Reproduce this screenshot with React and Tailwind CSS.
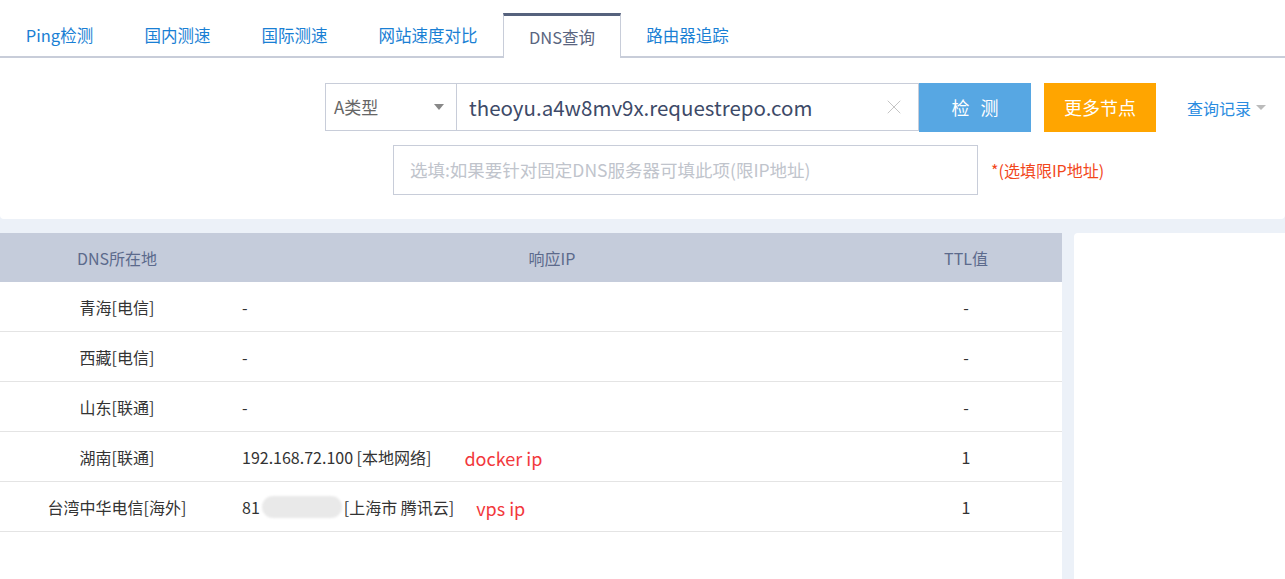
import { X } from 'lucide-react';

const tabs = [
  { name: 'Ping检测', w: 'w-[119px]' },
  { name: '国内测速', w: 'w-[117px]' },
  { name: '国际测速', w: 'w-[117px]' },
  { name: '网站速度对比', w: 'w-[150px]' },
  { name: 'DNS查询', w: 'w-[118px]', active: true },
  { name: '路由器追踪', w: 'w-[133px]' },
];

const rows = [
  { loc: '青海[电信]', ip: '-', ttl: '-' },
  { loc: '西藏[电信]', ip: '-', ttl: '-' },
  { loc: '山东[联通]', ip: '-', ttl: '-' },
  { loc: '湖南[联通]', ip: '192.168.72.100 [本地网络]', note: 'docker ip', ttl: '1' },
  { loc: '台湾中华电信[海外]', ip: 'vps', note: 'vps ip', ttl: '1' },
];

const App = () => {
  return (
    <div
      className="w-[1285px] h-[579px] overflow-hidden bg-[#ecf1f8] text-[#333]"
      style={{ fontFamily: '"Noto Sans CJK SC", "Noto Sans", sans-serif' }}
    >
      {/* Top panel */}
      <div className="bg-white rounded-b-[4px] h-[219px]">
        {/* Tabs */}
        <div className="pt-[13px] border-b-2 border-[#c8cdd9] flex h-[58px]">
          {tabs.map((t) =>
            t.active ? (
              <div
                key={t.name}
                className={`${t.w} h-[45px] -mb-[2px] flex items-center justify-center border-t-[3px] border-x border-t-[#56627d] border-x-[#c8cdd9] bg-white text-[16.5px] text-[#5a6580]`}
              >
                {t.name}
              </div>
            ) : (
              <div
                key={t.name}
                className={`${t.w} h-[44px] flex items-center justify-center text-[16.5px] text-[#1a7fd4]`}
              >
                {t.name}
              </div>
            )
          )}
        </div>

        {/* Query form */}
        <div className="flex mt-[25px]">
          <div className="ml-[325px] w-[132px] h-[48px] border border-[#c8cdd9] flex items-center justify-between pl-[8px] pr-[12px] text-[17px] text-[#666]">
            <span>A类型</span>
            <span className="w-0 h-0 border-x-[5px] border-x-transparent border-t-[6px] border-t-[#888]" />
          </div>
          <div className="w-[462px] h-[48px] border-y border-r border-[#c8cdd9] flex items-center justify-between pl-[12px] pr-[12px]">
            <span className="text-[20.5px] text-[#3d4a68]">theoyu.a4w8mv9x.requestrepo.com</span>
            <X size={24} strokeWidth={1} className="text-[#c5c5c5]" />
          </div>
          <button className="w-[112px] h-[49px] bg-[#57a7e3] text-white text-[18px] tracking-[0.6em] pl-[0.6em]">
            检测
          </button>
          <button className="ml-[13px] w-[112px] h-[49px] bg-[#ffa500] text-white text-[18px]">
            更多节点
          </button>
          <div className="ml-[31px] h-[49px] flex items-center gap-[5px] text-[16px] text-[#2a8ce0]">
            查询记录
            <span className="w-0 h-0 border-x-[5px] border-x-transparent border-t-[5px] border-t-[#bbb]" />
          </div>
        </div>
        <div className="flex items-center mt-[13px]">
          <div className="ml-[393px] w-[585px] h-[50px] border border-[#c8cdd9] flex items-center pl-[16px] text-[17.5px] text-[#c0c4cc]">
            选填:如果要针对固定DNS服务器可填此项(限IP地址)
          </div>
          <span className="ml-[13px] text-[16px] text-[#f2471c]">*(选填限IP地址)</span>
        </div>
      </div>

      {/* Results */}
      <div className="flex mt-[14px] gap-[12px]">
        <div className="w-[1062px] bg-white h-[346px]">
          <div className="grid grid-cols-[234px_636px_192px] h-[49px] items-center bg-[#c5ccdb] text-[16px] text-[#5c6a8c]">
            <div className="text-center">DNS所在地</div>
            <div className="text-center">响应IP</div>
            <div className="text-center">TTL值</div>
          </div>
          {rows.map((r) => (
            <div
              key={r.loc}
              className="grid grid-cols-[234px_636px_192px] h-[50px] items-center border-b border-[#e4e4e4] text-[16px] text-[#333]"
            >
              <div className="text-center">{r.loc}</div>
              <div className="pl-[8px] flex items-center">
                {r.ip === 'vps' ? (
                  <>
                    <span>81</span>
                    <span className="w-[80px] h-[22px] rounded-full bg-[#e9e9e9] blur-[1px] mx-[2px]" />
                    <span>[上海市 腾讯云]</span>
                  </>
                ) : (
                  <span>{r.ip}</span>
                )}
                {r.note && (
                  <span
                    className={`text-[18px] text-[#f2383c] ${r.ip === 'vps' ? 'ml-[22px]' : 'ml-[33px]'} mt-[4px]`}
                  >
                    {r.note}
                  </span>
                )}
              </div>
              <div className="text-center">{r.ttl}</div>
            </div>
          ))}
        </div>
        <div className="flex-1 bg-white rounded-tl-[4px]" />
      </div>
    </div>
  );
};

export default App;
